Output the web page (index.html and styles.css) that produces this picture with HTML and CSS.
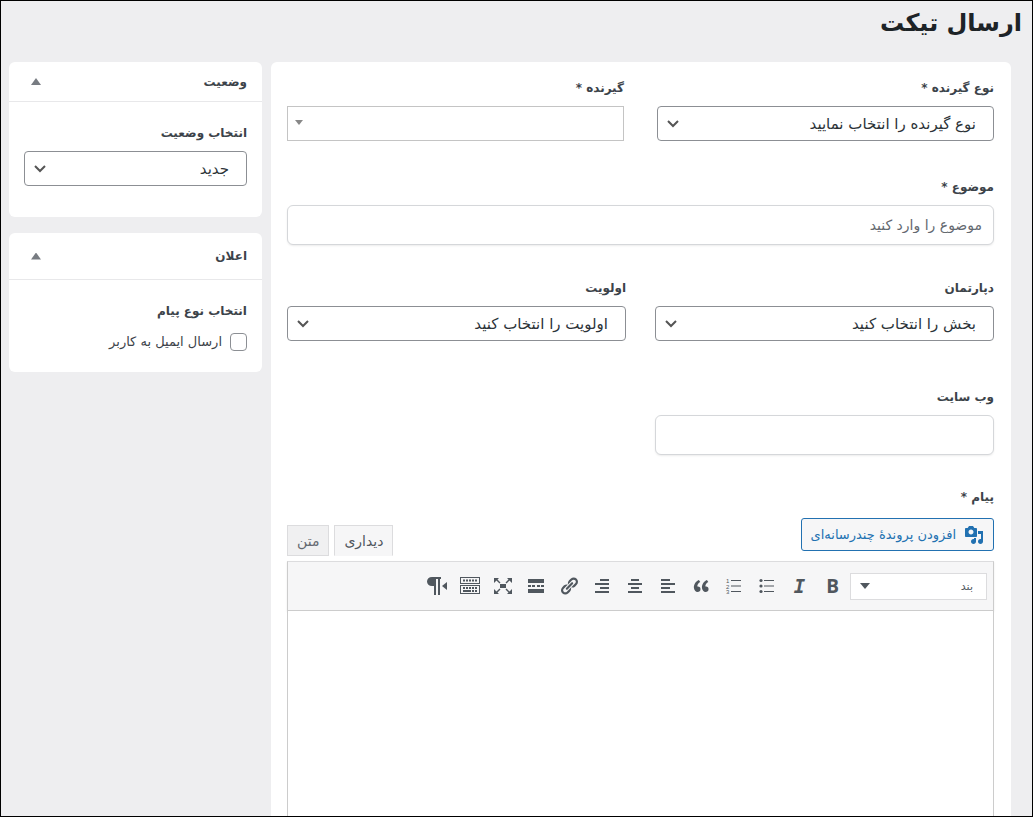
FILE: index.html
```html
<!DOCTYPE html>
<html lang="fa" dir="rtl">
<head>
    <meta charset="UTF-8">
    <meta name="viewport" content="width=device-width, initial-scale=1.0">
    <title>ارسال تیکت</title>
    <link rel="stylesheet" href="styles.css">
</head>
<body>
    <h1 class="page-title">ارسال تیکت</h1>
    <form class="layout">
        <main class="panel">
            <div class="row row-receiver">
                <div class="field">
                    <label for="receiverType">نوع گیرنده *</label>
                    <select id="receiverType" class="select">
                        <option>نوع گیرنده را انتخاب نمایید</option>
                    </select>
                </div>
                <div class="field">
                    <label for="receiver">گیرنده *</label>
                    <select id="receiver" class="select select-search">
                        <option></option>
                    </select>
                </div>
            </div>

            <div class="row row-subject">
                <div class="field">
                    <label for="subject">موضوع *</label>
                    <input type="text" id="subject" class="input" placeholder="موضوع را وارد کنید">
                </div>
            </div>

            <div class="row row-department">
                <div class="field">
                    <label for="department">دپارتمان</label>
                    <select id="department" class="select">
                        <option>بخش را انتخاب کنید</option>
                    </select>
                </div>
                <div class="field">
                    <label for="priority">اولویت</label>
                    <select id="priority" class="select">
                        <option>اولویت را انتخاب کنید</option>
                    </select>
                </div>
            </div>

            <div class="row row-website">
                <div class="field">
                    <label for="website">وب سایت</label>
                    <input type="text" id="website" class="input">
                </div>
            </div>

            <div class="editor">
                <label for="message">پیام *</label>
                <div class="editor-tools">
                    <button type="button" class="media-btn">
                        <svg viewBox="0 0 20 20"><path d="M13 11V4c0-.55-.45-1-1-1h-1.67L9 1H5L3.67 3H2c-.55 0-1 .45-1 1v7c0 .55.45 1 1 1h10c.55 0 1-.45 1-1zM7 4.5c1.38 0 2.5 1.12 2.5 2.5S8.38 9.5 7 9.5 4.5 8.38 4.5 7 5.62 4.5 7 4.5zM14 6h5v10.5c0 1.38-1.12 2.5-2.5 2.5S14 17.88 14 16.5s1.12-2.5 2.5-2.5c.17 0 .34.02.5.05V9h-3V6zm-4 8.05V13h2v3.5c0 1.38-1.12 2.5-2.5 2.5S7 17.88 7 16.5 8.12 14 9.5 14c.17 0 .34.02.5.05z"/></svg>
                        افزودن پروندهٔ چندرسانه‌ای
                    </button>
                    <div class="tabs">
                        <button type="button" class="tab active">دیداری</button>
                        <button type="button" class="tab">متن</button>
                    </div>
                </div>
                <div class="toolbar">
                    <select class="format" aria-label="قالب">
                        <option>بند</option>
                    </select>
                    <button type="button" class="tool tool-bold">B</button>
                    <button type="button" class="tool tool-italic">I</button>
                    <button type="button" class="tool" aria-label="فهرست نقطه‌ای">
                        <svg viewBox="0 0 20 20"><circle cx="4" cy="4.5" r="1.6"/><circle cx="4" cy="10" r="1.6"/><circle cx="4" cy="15.5" r="1.6"/><path d="M7 4h10v1H7zM7 9.500h10v1H7zM7 15h10v1H7z"/></svg>
                    </button>
                    <button type="button" class="tool" aria-label="فهرست شماره‌ای">
                        <svg viewBox="0 0 20 20"><text x="2" y="7">1</text><text x="2" y="12.500">2</text><text x="2" y="18">3</text><path d="M7 4h10v1H7zM7 9.500h10v1H7zM7 15h10v1H7z"/></svg>
                    </button>
                    <button type="button" class="tool" aria-label="نقل قول">
                        <svg viewBox="0 0 20 20"><path d="M9.490 13.220c0-.74-.2-1.380-.61-1.900-.62-.78-1.830-.88-2.530-.72-.29-1.650 1.110-3.750 2.920-4.650L7.880 4c-2.730 1.300-5.420 4.280-4.960 8.050C3.210 14.430 4.590 16 6.540 16c.85 0 1.560-.25 2.120-.75s.83-1.180.83-2.030zm8.050 0c0-.74-.2-1.380-.61-1.900-.63-.78-1.830-.88-2.530-.72-.29-1.650 1.110-3.750 2.920-4.650L15.930 4c-2.730 1.300-5.410 4.280-4.950 8.050.29 2.380 1.660 3.950 3.610 3.950.85 0 1.560-.25 2.120-.75s.83-1.180.83-2.030z"/></svg>
                    </button>
                    <button type="button" class="tool" aria-label="چپ‌چین">
                        <svg viewBox="0 0 20 20"><path d="M12 5V3H3v2h9zm5 4V7H3v2h14zm-5 4v-2H3v2h9zm5 4v-2H3v2h14z"/></svg>
                    </button>
                    <button type="button" class="tool" aria-label="وسط‌چین">
                        <svg viewBox="0 0 20 20"><path d="M14 5V3H6v2h8zm3 4V7H3v2h14zm-3 4v-2H6v2h8zm3 4v-2H3v2h14z"/></svg>
                    </button>
                    <button type="button" class="tool" aria-label="راست‌چین">
                        <svg viewBox="0 0 20 20"><path d="M17 5V3H8v2h9zm0 4V7H3v2h14zm0 4v-2H8v2h9zm0 4v-2H3v2h14z"/></svg>
                    </button>
                    <button type="button" class="tool" aria-label="پیوند">
                        <svg viewBox="0 0 20 20"><path d="M17.740 2.760c1.680 1.690 1.680 4.410 0 6.100l-1.530 1.520c-1.120 1.120-2.700 1.470-4.140 1.090l2.620-2.610.76-.77.76-.76c.84-.84.84-2.200 0-3.040-.84-.85-2.200-.85-3.040 0l-.77.76-3.380 3.380c-.37-1.440-.02-3.020 1.100-4.140l1.520-1.530c1.690-1.680 4.420-1.680 6.100 0zM8.590 13.430l5.340-5.340c.42-.42.42-1.100 0-1.520-.44-.43-1.130-.39-1.530 0l-5.330 5.340c-.42.42-.42 1.100 0 1.520.44.43 1.130.39 1.520 0zm-.76 2.290l4.140-4.150c.38 1.440.03 3.020-1.090 4.140l-1.520 1.530c-1.690 1.680-4.410 1.680-6.100 0-1.680-1.680-1.680-4.420 0-6.100l1.530-1.520c1.120-1.120 2.700-1.470 4.140-1.100l-4.140 4.150c-.85.84-.85 2.200 0 3.050.84.84 2.200.84 3.040 0z"/></svg>
                    </button>
                    <button type="button" class="tool" aria-label="ادامه مطلب">
                        <svg viewBox="0 0 20 20"><path d="M18 7V3H2v4h16zM5 11V9H2v2h3zm4 0V9H6v2h3zm5 0V9h-3v2h3zm4 0V9h-3v2h3zm0 6v-4H2v4h16z"/></svg>
                    </button>
                    <button type="button" class="tool" aria-label="تمام صفحه">
                        <svg viewBox="0 0 20 20"><path d="M7 8h6v4H7zM1 2h5L4.500 3.500l3 3-1 1-3-3L1 7zM19 2v5l-2.500-2.500-3 3-1-1 3-3L14 2zM1 18v-5l2.500 2.500 3-3 1 1-3 3L6 18zM19 18h-5l1.500-1.500-3-3 1-1 3 3L19 13z"/></svg>
                    </button>
                    <button type="button" class="tool" aria-label="نوار ابزار">
                        <svg viewBox="0 0 20 20"><path d="M20 1v7H0V1h20zm-1 6V2H1v5h18zM5 3.500v2H3v-2h2zm3 0v2H6v-2h2zm3 0v2H9v-2h2zm3 0v2h-2v-2h2zm3 0v2h-2v-2h2zM20 9v9H0V9h20zm-1 8v-7H1v7h18zM5 11v2H3v-2h2zm3 0v2H6v-2h2zm3 0v2H9v-2h2zm3 0v2h-2v-2h2zm3 0v2h-2v-2h2zm-6 3v2H3v-2h8zm3 0v2h-2v-2h2zm3 0v2h-2v-2h2z"/></svg>
                    </button>
                    <button type="button" class="tool" aria-label="راست به چپ">
                        <svg viewBox="0 0 20 20"><path d="M5 1h9v2h-1v16h-2V3H9v16H7v-9H5C2 10 0 8 0 5.500S2 1 5 1zM20 6v8l-5-4z"/></svg>
                    </button>
                </div>
                <textarea id="message" class="editor-body"></textarea>
            </div>
        </main>

        <aside class="sidebar">
            <section class="box">
                <header class="box-head">
                    <h2>وضعیت</h2>
                    <button type="button" class="toggle" aria-label="بستن وضعیت"></button>
                </header>
                <div class="box-body">
                    <label for="status">انتخاب وضعیت</label>
                    <select id="status" class="select">
                        <option>جدید</option>
                    </select>
                </div>
            </section>
            <section class="box">
                <header class="box-head box-head-tall">
                    <h2>اعلان</h2>
                    <button type="button" class="toggle" aria-label="بستن اعلان"></button>
                </header>
                <div class="box-body box-body-notice">
                    <h3>انتخاب نوع پیام</h3>
                    <label class="check">
                        <input type="checkbox">
                        ارسال ایمیل به کاربر
                    </label>
                </div>
            </section>
        </aside>
    </form>
</body>
</html>
```
FILE: styles.css
```css
* {
    box-sizing: border-box;
}
body {
    display: flex;
    flex-direction: column;
    height: 100vh;
    margin: 0;
    border: 1px solid #000;
    overflow: hidden;
    background: #eeeef0;
    color: #3c434a;
    font-family: "DejaVu Sans", sans-serif;
    font-size: 13px;
    line-height: 20px;
}
button, input, select, textarea {
    margin: 0;
    font-family: inherit;
    color: inherit;
}
.page-title {
    margin: 0;
    padding: 2px 10px 19px;
    font-size: 24px;
    line-height: 40px;
    color: #1d2327;
}
.layout {
    display: flex;
    flex: 1;
    gap: 9px;
    min-height: 0;
    padding: 0 21px 0 8px;
}
.panel {
    display: flex;
    flex: 1;
    flex-direction: column;
    padding: 16px 17px 0 16px;
    background: #fff;
    border-radius: 6px 6px 0 0;
}
.row {
    display: flex;
    gap: 29px;
    margin-bottom: 32px;
}
.row-receiver {
    gap: 33px;
    margin-bottom: 36px;
}
.row-subject {
    margin-bottom: 33px;
}
.row-department {
    margin-bottom: 46px;
}
.row-website .field {
    flex: 0 0 48%;
}
.field {
    flex: 1;
    min-width: 0;
}
label {
    display: block;
    margin-bottom: 8px;
    font-size: 12px;
    font-weight: bold;
}
.select {
    display: block;
    width: 100%;
    height: 35px;
    padding: 0 17px 0 30px;
    border: 1px solid #8c8f94;
    border-radius: 4px;
    appearance: none;
    background: #fff url("data:image/svg+xml,%3Csvg xmlns='http://www.w3.org/2000/svg' width='12' height='8'%3E%3Cpath d='M1 1l5 5 5-5' fill='none' stroke='%23555' stroke-width='2'/%3E%3C/svg%3E") no-repeat 9px center;
    font-size: 15px;
    color: #2c3338;
}
.select-search {
    border-color: #c4c4c4;
    border-radius: 0;
    background-image: url("data:image/svg+xml,%3Csvg xmlns='http://www.w3.org/2000/svg' width='8' height='8'%3E%3Cpath d='M0 1h8L4 6z' fill='%23888'/%3E%3C/svg%3E");
    background-position: 7px 12px;
}
.input {
    display: block;
    width: 100%;
    height: 40px;
    padding: 0 11px;
    border: 1px solid #d5d7da;
    border-radius: 6px;
    box-shadow: 0 1px 2px rgba(0, 0, 0, 0.08);
    background: #fff;
    font-size: 14px;
}
.input::placeholder {
    color: #646970;
    opacity: 1;
}
.editor {
    display: flex;
    flex: 1;
    flex-direction: column;
    min-height: 0;
}
.editor label {
    margin-bottom: 11px;
}
.editor-tools {
    display: flex;
    justify-content: space-between;
    align-items: flex-start;
    height: 43px;
}
.media-btn {
    display: flex;
    align-items: center;
    gap: 8px;
    height: 33px;
    padding: 0 9px;
    border: 1px solid #2271b1;
    border-radius: 3px;
    background: #f6f6f7;
    color: #2271b1;
    font-size: 13px;
}
.media-btn svg {
    width: 20px;
    height: 20px;
    fill: currentColor;
}
.tabs {
    display: flex;
    gap: 5px;
    padding-top: 7px;
}
.tab {
    height: 31px;
    padding: 0 9px;
    border: 1px solid #dcdcde;
    background: #f0f0f1;
    color: #646970;
    font-size: 14px;
}
.tab.active {
    border-bottom-color: #f6f6f7;
    background: #f6f6f7;
    color: #50575e;
}
.toolbar {
    display: flex;
    align-items: center;
    height: 50px;
    padding: 0 6px;
    border: 1px solid #ccc;
    border-top-color: #dcdcde;
    background: #f6f6f7;
    box-shadow: 0 1px 2px rgba(0, 0, 0, 0.08);
}
.format {
    width: 137px;
    height: 27px;
    margin-left: 1px;
    padding: 0 13px;
    border: 1px solid #dcdcde;
    border-radius: 0;
    appearance: none;
    background: #fff url("data:image/svg+xml,%3Csvg xmlns='http://www.w3.org/2000/svg' width='10' height='6'%3E%3Cpath d='M0 0h10L5 6z' fill='%2350575e'/%3E%3C/svg%3E") no-repeat 9px center;
    color: #50575e;
    font-size: 11px;
}
.tool {
    display: flex;
    align-items: center;
    justify-content: center;
    width: 33px;
    height: 30px;
    padding: 0;
    border: 0;
    background: none;
    color: #50575e;
}
.tool svg {
    width: 20px;
    height: 20px;
    fill: currentColor;
}
.tool text {
    font-family: "Liberation Sans", sans-serif;
    font-size: 6px;
    direction: ltr;
}
.tool-bold {
    font-family: "Open Sans", sans-serif;
    font-size: 19px;
    font-weight: bold;
}
.tool-italic {
    font-family: "DejaVu Sans Mono", monospace;
    font-size: 19px;
    font-style: italic;
    font-weight: bold;
}
.editor-body {
    display: block;
    flex: 1;
    width: 100%;
    padding: 10px;
    border: 1px solid #ccc;
    border-width: 0 1px;
    resize: none;
    outline: 0;
}
.sidebar {
    width: 253px;
}
.box {
    margin-bottom: 16px;
    background: #fff;
    border-radius: 6px;
}
.box-head {
    display: flex;
    align-items: center;
    justify-content: space-between;
    height: 40px;
    padding: 0 15px 0 22px;
    border-bottom: 1px solid #e8e8ea;
}
.box-head-tall {
    height: 47px;
}
h2, h3 {
    margin: 0;
    font-size: 12px;
    line-height: 20px;
}
.toggle {
    width: 10px;
    height: 7px;
    padding: 0;
    border: 0;
    background: #787c82;
    clip-path: polygon(50% 0, 100% 100%, 0 100%);
}
.box-body {
    padding: 21px 15px 31px;
}
.box-body-notice {
    padding-bottom: 20px;
}
.check {
    display: flex;
    align-items: center;
    gap: 8px;
    margin: 11px 0 0;
    font-size: 13px;
    font-weight: normal;
}
.check input {
    width: 17px;
    height: 18px;
    border: 1px solid #8c8f94;
    border-radius: 4px;
    appearance: none;
    background: #fff;
}
```
